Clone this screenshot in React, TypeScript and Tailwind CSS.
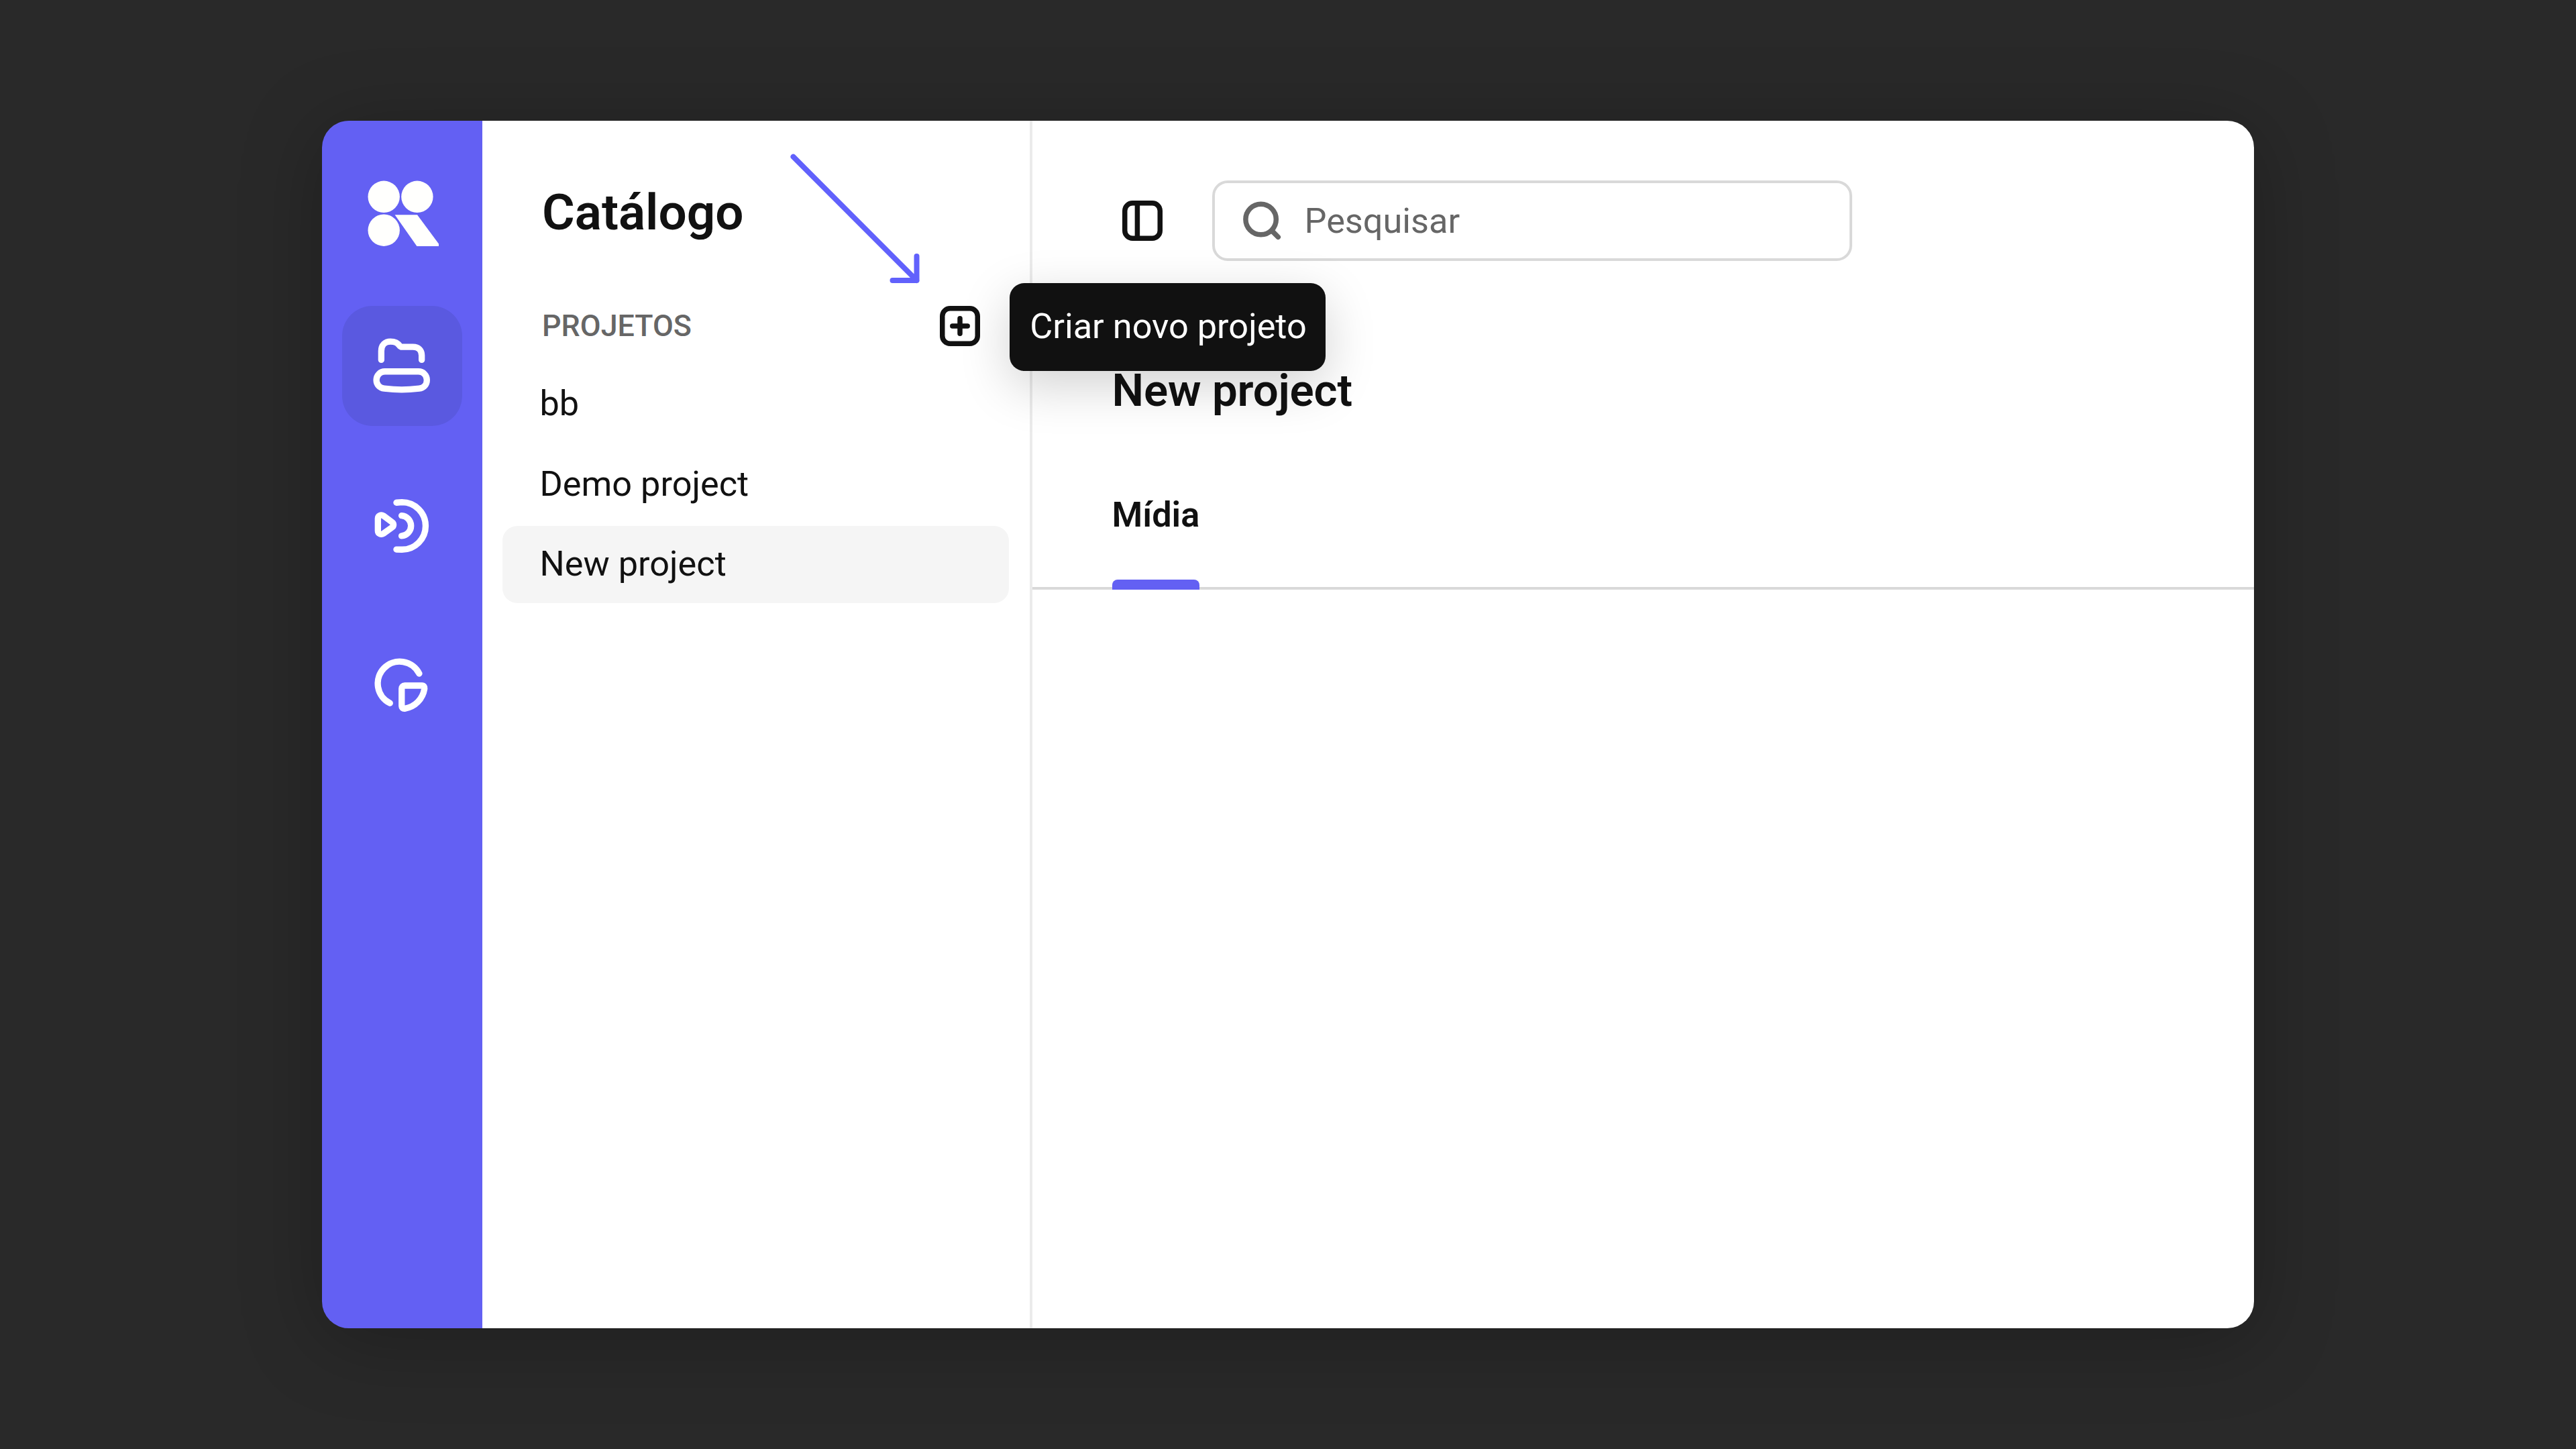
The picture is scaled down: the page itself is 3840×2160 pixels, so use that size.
import { useState } from "react";
import clsx from "clsx";

const projects = ["bb", "Demo project", "New project"];

function Logo() {
  return (
    <svg width="108" height="100" viewBox="0 0 108 100" fill="#fffffd" className="ml-[5px] shrink-0">
      <circle cx="24.2" cy="24.3" r="23.7" />
      <circle cx="73.9" cy="24.3" r="23.7" />
      <circle cx="24.2" cy="74.2" r="23.7" />
      <path d="M40.6 51.3H74L106 94.6V97.9H73.4Z" />
    </svg>
  );
}

function FolderIcon() {
  return (
    <>
      <path d="M3.85 9.75V6.2C3.85 3.9 5.3 2.45 7.5 2.45C9.5 2.45 10.2 3 11 3.9C11.35 4.35 11.6 4.6 12.1 4.6H16.5C18.8 4.6 20 6 20 8V9.75" />
      <path d="M5.3 14.4H18.7C20.6 14.4 22.05 15.9 22.05 17.8C22.05 19.6 20.8 21 19 21.2C16.5 21.5 14.5 21.65 12 21.65C9.5 21.65 7.5 21.5 5 21.2C3.2 21 1.9 19.6 1.9 17.8C1.9 15.9 3.4 14.4 5.3 14.4Z" />
    </>
  );
}

function BroadcastIcon() {
  return (
    <g transform="translate(0.1 0.1)">
      <path d="M9.8 2.65L12 2.5a9.4 9.4 0 0 1 0 18.9L9.8 21.35" />
      <path d="M11.85 7.85a4.06 4.06 0 0 1 0 8.1" />
      <path d="M2.4 9V13.9C2.4 15.1 3.7 15.6 4.6 15L8.1 12.5C8.8 12 8.8 11 8.1 10.5L4.6 7.9C3.7 7.3 2.4 7.8 2.4 9Z" />
    </g>
  );
}

function ChartIcon() {
  return (
    <g transform="translate(0.2 0.25)">
      <path d="M18.8 7A8.75 8.75 0 1 0 7.1 18.8" />
      <path d="M13 11.8H19.9C20.6 11.8 21 12.3 20.9 13C20.2 17.2 17.2 20.3 13 21C12.3 21.1 11.8 20.6 11.8 20V13C11.8 12.3 12.3 11.8 13 11.8Z" />
    </g>
  );
}

const navItems = [
  { id: "catalog", icon: FolderIcon },
  { id: "live", icon: BroadcastIcon },
  { id: "analytics", icon: ChartIcon },
];

function Sidebar() {
  const [active, setActive] = useState("catalog");

  return (
    <nav className="flex w-[238.5px] shrink-0 flex-col items-center bg-[#6360f3] pt-[88.5px]">
      <Logo />
      <div className="mt-[87px] flex flex-col gap-[59.6px]">
        {navItems.map(({ id, icon: Icon }) => (
          <button
            key={id}
            onClick={() => setActive(id)}
            className={clsx(
              "flex size-[179px] items-center justify-center rounded-[45px]",
              active === id && "bg-[#5a59e0]"
            )}
          >
            <svg
              width="89.6"
              height="89.6"
              viewBox="0 0 24 24"
              fill="none"
              stroke="white"
              strokeWidth="2.5"
              strokeLinecap="round"
              strokeLinejoin="round"
            >
              <Icon />
            </svg>
          </button>
        ))}
      </div>
    </nav>
  );
}

function Catalog() {
  const [selected, setSelected] = useState("New project");

  return (
    <aside className="relative z-10 flex w-[820px] shrink-0 flex-col border-r-4 border-[#ebebeb] bg-white pt-[92px]">
      <h1 className="pl-[89.5px] text-[74.67px] leading-[90px] font-semibold">Catálogo</h1>

      {/* Section header */}
      <div className="mt-[94px] flex h-[60px] items-center justify-between pr-[74px] pl-[89.5px]">
        <h2 className="text-[44.8px] leading-[60px] font-medium text-[#666]">PROJETOS</h2>
        <div className="relative">
          <button className="block">
            <svg width="60" height="60" viewBox="0 0 60 60" fill="none" stroke="#111" strokeWidth="7.5" strokeLinecap="round">
              <rect x="3.75" y="3.75" width="52.5" height="52.5" rx="11.5" />
              <path d="M30 18.8V41.2M18.8 30H41.2" />
            </svg>
          </button>
          <div className="absolute top-[-34px] left-[104.5px] flex h-[131px] w-[471px] items-center justify-center rounded-[22px] bg-[#111] pl-[2px] text-[52.27px] whitespace-nowrap text-white shadow-[0_22px_75px_rgba(0,0,0,0.18)]">
            Criar novo projeto
          </div>
        </div>
      </div>

      {/* Projects */}
      <ul className="mt-[29px] flex flex-col gap-1 pr-[31px] pl-[30px]">
        {projects.map((name) => (
          <li key={name}>
            <button
              onClick={() => setSelected(name)}
              className={clsx(
                "flex h-[115.3px] w-full items-center rounded-[22px] pl-[56px] text-[52.27px]",
                selected === name && "bg-[#f5f5f5]"
              )}
            >
              {name}
            </button>
          </li>
        ))}
      </ul>

      <svg
        className="absolute top-[44px] left-[455px]"
        width="200"
        height="206"
        viewBox="0 0 200 206"
        fill="none"
        stroke="#6161fc"
        strokeWidth="8"
        strokeLinecap="round"
        strokeLinejoin="round"
      >
        <path d="M8.5 9.7L192.5 194M192.5 158V194H156.5" />
      </svg>
    </aside>
  );
}

function Project() {
  return (
    <main className="flex min-w-0 flex-1 flex-col bg-white pt-[89px]">
      <div className="flex items-center gap-[74px] pl-[134px]">
        <button>
          <svg width="60" height="60" viewBox="0 0 60 60" fill="none" stroke="#111" strokeWidth="7.5">
            <rect x="3.75" y="3.75" width="52.5" height="52.5" rx="11.5" />
            <path d="M22.4 4V56" />
          </svg>
        </button>
        <label className="flex h-[120px] w-[954px] items-center rounded-[23px] border-4 border-[#d9d9d9] pl-[42px]">
          <svg width="60" height="60" viewBox="0 0 60 60" fill="none" stroke="#666" strokeWidth="7.5" strokeLinecap="round">
            <circle cx="26.6" cy="28" r="22.7" />
            <path d="M43 45L52.3 54.3" />
          </svg>
          <input
            type="text"
            placeholder="Pesquisar"
            className="ml-[32px] min-w-0 flex-1 pt-[2px] text-[52.27px] outline-none placeholder:text-[#666]"
          />
        </label>
      </div>

      <h2 className="mt-[153px] pl-[119px] text-[67.2px] leading-[80px] font-semibold tracking-[-0.15px]">
        New project
      </h2>

      {/* Tabs */}
      <div className="mt-[116px] flex border-b-4 border-[#d9d9d9] pl-[119px]">
        <button className="relative pb-[77px] text-[52.27px] leading-[60px] font-semibold">
          Mídia
          <span className="absolute inset-x-0 -bottom-1 h-[15px] rounded-t-[8px] bg-[#6360f3]" />
        </button>
      </div>
    </main>
  );
}

export default function App() {
  return (
    <div className="flex h-screen w-screen items-center justify-center bg-[#292929] font-[Roboto,sans-serif] text-[#111]">
      <div className="flex h-[1800px] w-[2880px] overflow-hidden rounded-[40px] shadow-[0_16px_120px_rgba(0,0,0,0.25)]">
        <Sidebar />
        <Catalog />
        <Project />
      </div>
    </div>
  );
}
